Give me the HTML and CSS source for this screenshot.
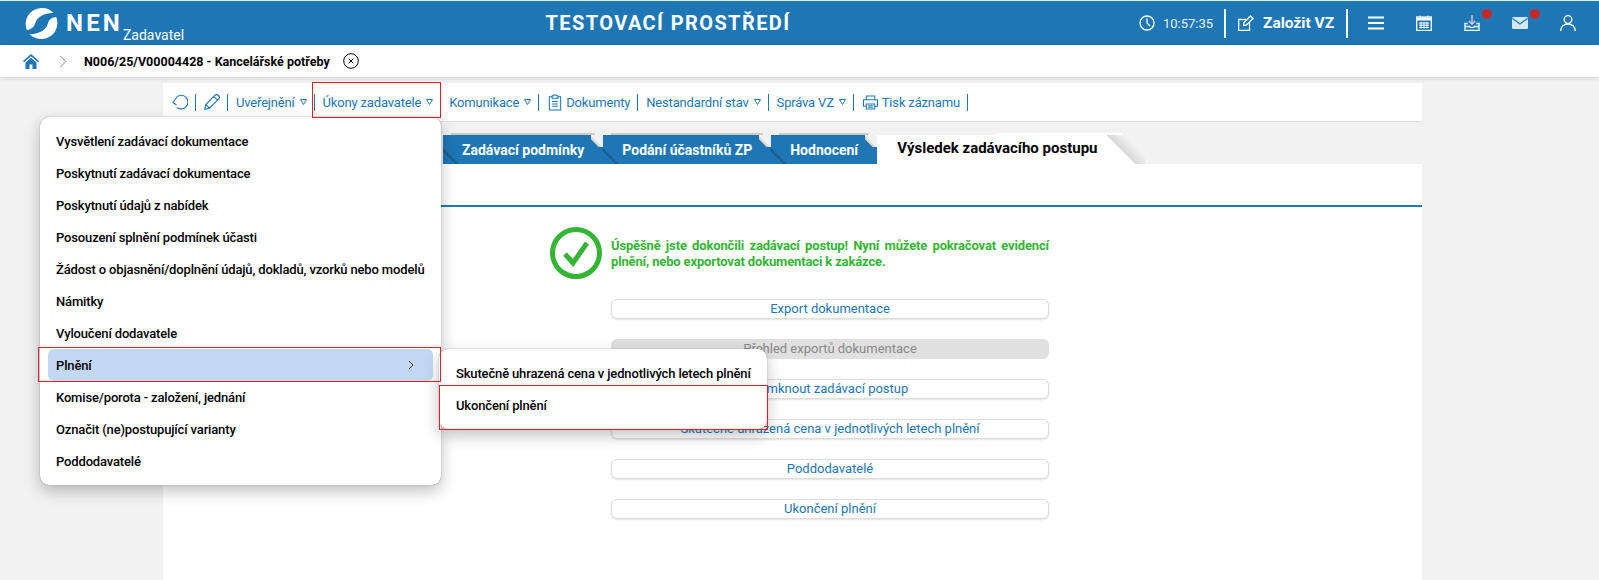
FILE: index.html
```html
<!DOCTYPE html>
<html lang="cs">
<head>
    <meta charset="UTF-8">
    <title>NEN Zadavatel</title>
    <link rel="stylesheet" href="styles.css">
</head>
<body>
    <header class="top-bar">
        <div class="brand">
            <svg class="brand-logo" viewBox="0 0 36 36">
                <path d="M2 25A17.500 17.500 0 0 1 31 6.500C23 6 13 10 11 18C10 22 6 25 2 25Z" fill="#fff"/>
                <path d="M2 25A17.500 17.500 0 0 1 31 6.500C23 6 13 10 11 18C10 22 6 25 2 25Z" fill="#fff" transform="rotate(180 18 18)"/>
            </svg>
            <span class="brand-name">NEN</span>
            <span class="brand-role">Zadavatel</span>
        </div>
        <div class="env-title">TESTOVACÍ PROSTŘEDÍ</div>
        <div class="top-tools">
            <svg class="tool-clock" viewBox="0 0 16 16"><circle cx="8" cy="8" r="7"/><path d="M8 3.500V8L11 11"/></svg>
            <span class="clock-time">10:57:35</span>
            <span class="top-sep"></span>
            <svg class="tool-edit" viewBox="0 0 16 16"><path d="M11.500 7.500V15.500H.7V4.500H8.500"/><path d="M5.500 10.500L6 7.500L12.500 1L15 3.500L8.500 10Z"/></svg>
            <span class="new-order">Založit VZ</span>
            <span class="top-sep"></span>
            <svg class="tool-icon tool-menu" viewBox="0 0 16 16"><path d="M0 2.500H16M0 8H16M0 13.500H16"/></svg>
            <svg class="tool-icon tool-cal" viewBox="0 0 16 16"><rect x=".7" y="2" width="14.600" height="13.500"/><path d="M.7 4H15.300" stroke-width="3"/><path d="M4 .5V3M12 .5V3M3 8H13M3 10.200H13M3 12.500H13M5 7V13.500M8 7V13.500M11 7V13.500" stroke-width="1"/></svg>
            <span class="tool-badged tool-down">
                <svg class="tool-icon" viewBox="0 0 16 16"><path d="M8 0V9M4.800 6L8 9.200L11.200 6" stroke="#f3c9dd"/><path d="M3.500 8.500H1V15.500H15V8.500H12.500M1 11.500H5.500C6 13 10 13 10.500 11.500H15"/></svg>
                <span class="badge"></span>
            </span>
            <span class="tool-badged tool-mail">
                <svg class="tool-icon" viewBox="0 0 16 16"><rect x="0" y="2" width="16" height="12" rx="1.500" fill="#d5e8f5" stroke="none"/><path d="M.5 3.500L8 9L15.500 3.500" stroke="#1e76b5" stroke-width="1.200"/></svg>
                <span class="badge"></span>
            </span>
            <svg class="tool-icon tool-user" viewBox="0 0 16 16"><circle cx="8" cy="4.500" r="3.800"/><path d="M.8 16C.8 11.500 4 9 8 9S15.200 11.500 15.200 16"/></svg>
        </div>
    </header>

    <nav class="crumb-bar">
        <svg class="crumb-home" viewBox="0 0 16 15">
            <path d="M8 0L0 7L1 8.300L8 2.300L15 8.300L16 7Z" fill="#1e76b5"/>
            <path d="M8 3.800L2.500 8.500V15H6.500V10.500H9.500V15H13.500V8.500Z" fill="#1e76b5"/>
        </svg>
        <svg class="crumb-next" viewBox="0 0 8 14"><path d="M1 1L7 7L1 13"/></svg>
        <span class="crumb-title">N006/25/V00004428 - Kancelářské potřeby</span>
        <svg class="crumb-close" viewBox="0 0 16 16"><circle cx="8" cy="8" r="7.300"/><path d="M5.700 5.700L10.300 10.300M10.300 5.700L5.700 10.300"/></svg>
    </nav>

    <main class="panel">
        <div class="toolbar">
            <svg class="tb-icon tb-back" viewBox="0 0 16 16"><path d="M5 2.700A6.800 6.800 0 1 1 5 13.500"/><path d="M5 2.700L1 8.500L4.500 11"/></svg>
            <span class="tb-sep"></span>
            <svg class="tb-icon tb-pencil" viewBox="0 0 16 16"><path d="M.7 15.300L1.800 10.500L11 1.200C12 .4 13.500 .5 14.500 1.500S15.600 4 14.800 5L5.500 14.200ZM1.800 10.500L5.500 14.200M9.800 2.500L13.500 6.200"/></svg>
            <span class="tb-sep"></span>
            <a class="tb-link">Uveřejnění</a>
            <svg class="caret" viewBox="0 0 7 6"><path d="M.5 .5H6.500L3.500 5.500Z"/></svg>
            <span class="tb-sep"></span>
            <a class="tb-link">Úkony zadavatele</a>
            <svg class="caret" viewBox="0 0 7 6"><path d="M.5 .5H6.500L3.500 5.500Z"/></svg>
            <span class="tb-sep"></span>
            <a class="tb-link">Komunikace</a>
            <svg class="caret" viewBox="0 0 7 6"><path d="M.5 .5H6.500L3.500 5.500Z"/></svg>
            <span class="tb-sep"></span>
            <svg class="tb-icon tb-doc" viewBox="0 0 16 18"><path d="M5 3H2V17H14V3H11M5 1.800H6.500C6.800 .5 9.200 .5 9.500 1.800H11V4.500H5ZM5 8H11M5 10.500H11M5 13H11"/></svg>
            <a class="tb-link">Dokumenty</a>
            <span class="tb-sep"></span>
            <a class="tb-link">Nestandardní stav</a>
            <svg class="caret" viewBox="0 0 7 6"><path d="M.5 .5H6.500L3.500 5.500Z"/></svg>
            <span class="tb-sep"></span>
            <a class="tb-link">Správa VZ</a>
            <svg class="caret" viewBox="0 0 7 6"><path d="M.5 .5H6.500L3.500 5.500Z"/></svg>
            <span class="tb-sep"></span>
            <svg class="tb-icon tb-print" viewBox="0 0 18 16"><path d="M4.500 5V1H13.500V5M4.500 12H1.500V5H16.500V12H13.500M4.500 9.500H13.500V15H4.500ZM6.500 11.500H11.500M6.500 13H11.500"/></svg>
            <a class="tb-link">Tisk záznamu</a>
            <span class="tb-sep"></span>
        </div>

        <div class="tabs">
            <div class="tab">Zadávací podmínky</div>
            <div class="tab">Podání účastníků ZP</div>
            <div class="tab">Hodnocení</div>
            <div class="tab tab-active">Výsledek zadávacího postupu</div>
        </div>

        <div class="tab-body">
            <div class="result-box">
                <svg class="ok-icon" viewBox="0 0 52 52"><circle cx="26" cy="26" r="23.500"/><path d="M15 27L23 36L37 16"/></svg>
                <div class="result-side">
                    <p class="ok-text">Úspěšně jste dokončili zadávací postup! Nyní můžete pokračovat evidencí plnění, nebo exportovat dokumentaci k zakázce.</p>
                    <a class="btn">Export dokumentace</a>
                    <a class="btn btn-off">Přehled exportů dokumentace</a>
                    <a class="btn">Zamknout zadávací postup</a>
                    <a class="btn">Skutečně uhrazená cena v jednotlivých letech plnění</a>
                    <a class="btn">Poddodavatelé</a>
                    <a class="btn">Ukončení plnění</a>
                </div>
            </div>
        </div>
    </main>

    <ul class="menu menu-main">
        <li>Vysvětlení zadávací dokumentace</li>
        <li>Poskytnutí zadávací dokumentace</li>
        <li>Poskytnutí údajů z nabídek</li>
        <li>Posouzení splnění podmínek účasti</li>
        <li>Žádost o objasnění/doplnění údajů, dokladů, vzorků nebo modelů</li>
        <li>Námitky</li>
        <li>Vyloučení dodavatele</li>
        <li class="menu-open">Plnění
            <svg class="menu-arrow" viewBox="0 0 6 10"><path d="M1 1L5 5L1 9"/></svg>
        </li>
        <li>Komise/porota - založení, jednání</li>
        <li>Označit (ne)postupující varianty</li>
        <li>Poddodavatelé</li>
    </ul>
    <ul class="menu menu-sub">
        <li>Skutečně uhrazená cena v jednotlivých letech plnění</li>
        <li>Ukončení plnění</li>
    </ul>

    <!-- red marks from the screenshot author -->
    <div class="mark mark-tool"></div>
    <div class="mark mark-item"></div>
    <div class="mark mark-sub"></div>
</body>
</html>
```

FILE: styles.css
```css
* {
    box-sizing: border-box;
}
html, body {
    height: 580px;
    overflow: hidden;
}
body {
    margin: 0;
    background-color: #f2f2f2;
    font-family: Roboto, Arial, sans-serif;
    font-size: 13px;
    color: #000;
}

/* top bar */
.top-bar {
    display: flex;
    align-items: center;
    height: 45px;
    border-top: 1px solid #dfeaf3;
    background-color: #1e76b5;
    color: #fff;
}
.brand {
    display: flex;
    width: 198px;
    height: 44px;
    padding-left: 25px;
}
.brand-logo {
    width: 33px;
    height: 33px;
    margin-top: 6px;
}
.brand-name {
    margin: 8px 0 0 8px;
    font-size: 24px;
    line-height: 28px;
    font-weight: 700;
    letter-spacing: 3.2px;
}
.brand-role {
    margin: 26px 0 0 0;
    font-size: 14px;
    line-height: 16px;
}
.env-title {
    flex: 1;
    text-align: center;
    font-size: 20px;
    font-weight: 700;
    letter-spacing: 1.4px;
}
.top-tools {
    display: flex;
    align-items: center;
    width: 461px;
    height: 44px;
}
.top-tools svg {
    fill: none;
    stroke: #fff;
    stroke-width: 1.3;
}
.tool-clock {
    width: 16px;
    height: 16px;
    margin-left: 1px;
}
.clock-time {
    width: 49px;
    margin-left: 8px;
    font-size: 13px;
    color: #e8f1f8;
}
.top-sep {
    width: 2px;
    height: 29px;
    margin-left: 12px;
    background-color: #fff;
}
.tool-edit {
    width: 16px;
    height: 16px;
    margin-left: 12px;
}
.new-order {
    width: 71px;
    margin-left: 9px;
    font-size: 15.5px;
    font-weight: 700;
    white-space: nowrap;
}
.tool-icon {
    width: 16px;
    height: 16px;
}
.top-tools .tool-menu {
    margin-left: 20px;
    stroke-width: 1.8;
}
.tool-cal,
.tool-down,
.tool-mail,
.tool-user {
    margin-left: 32px;
}
.tool-badged {
    position: relative;
    display: flex;
}
.badge {
    position: absolute;
    top: -6px;
    left: 18px;
    width: 10px;
    height: 10px;
    border-radius: 50%;
    background-color: #c62828;
}

/* breadcrumb */
.crumb-bar {
    position: relative;
    display: flex;
    align-items: center;
    height: 32px;
    padding-left: 23px;
    background-color: #fff;
    box-shadow: 0 1px 5px rgba(0, 0, 0, .15);
}
.crumb-home {
    width: 16px;
    height: 15px;
}
.crumb-next {
    width: 8px;
    height: 13px;
    margin-left: 20px;
    fill: none;
    stroke: #777;
}
.crumb-title {
    margin-left: 17px;
    font-size: 12.5px;
    font-weight: 700;
}
.crumb-close {
    width: 16px;
    height: 16px;
    margin-left: 13px;
    fill: none;
    stroke: #000;
}

/* content panel */
.panel {
    width: 1259px;
    height: 503px;
    margin-left: 163px;
    padding-top: 6px;
}
.toolbar {
    display: flex;
    align-items: center;
    height: 39px;
    padding-left: 9px;
    border-bottom: 1px solid #ddd;
    background-color: #fff;
}
.tb-icon {
    fill: none;
    stroke: #1e76b5;
    stroke-width: 1.1;
}
.tb-back {
    width: 16px;
    height: 16px;
}
.tb-pencil {
    width: 16px;
    height: 16px;
}
.tb-doc {
    width: 16px;
    height: 17px;
    margin-right: 3px;
}
.tb-print {
    width: 17px;
    height: 15px;
    margin-right: 3px;
}
.tb-sep {
    width: 1px;
    height: 17px;
    margin: 0 8px 0 7px;
    background-color: #1e76b5;
}
.tb-link {
    color: #1e76b5;
    letter-spacing: -.17px;
    white-space: nowrap;
}
.caret {
    width: 7px;
    height: 6px;
    margin-left: 5px;
    fill: none;
    stroke: #1e76b5;
    stroke-width: 1;
}

/* tabs */
.tabs {
    display: flex;
    height: 31px;
    margin-top: 11px;
    padding: 2px 0 0 280px;
}
.tab {
    position: relative;
    height: 29px;
    padding: 0 19px;
    background: linear-gradient(45deg, #1e76b5 8px, #175a8c 10px, #1e76b5 12px);
    color: #fff;
    font-size: 14px;
    line-height: 30px;
    font-weight: 700;
    white-space: nowrap;
}
.tab::before {
    content: "";
    position: absolute;
    top: -2px;
    left: 8px;
    right: 8px;
    height: 2px;
    background-color: #ccc;
}
.tab::after {
    content: "";
    position: absolute;
    top: 0;
    right: 0;
    width: 12px;
    height: 12px;
    background: linear-gradient(225deg, #f2f2f2 50%, #c4c4c4 68%, #1e76b5 71%);
}
.tab-active {
    width: 268px;
    padding: 0 0 0 20px;
    background: #fff;
    color: #000;
    font-size: 15px;
    line-height: 27px;
}
.tab-active::before {
    background-color: #fff;
    left: 120px;
    right: 23px;
}
.tab-active::after {
    width: 39px;
    height: 29px;
    background: linear-gradient(225deg, #f2f2f2 15px, #d6d6d6 27px, #fff 27.6px);
}
.tab-body {
    height: 416px;
    padding-top: 41px;
    background-color: #fff;
}
.result-box {
    display: flex;
    padding: 20px 0 0 387px;
    border-top: 2px solid #1e76b5;
}
.ok-icon {
    width: 52px;
    height: 52px;
    margin-right: 9px;
    fill: none;
    stroke: #35b435;
    stroke-width: 5;
}
.result-side {
    display: flex;
    flex-direction: column;
    gap: 20px;
    width: 438px;
}
.ok-text {
    margin: 11px 0 9px;
    color: #35b435;
    font-size: 13px;
    line-height: 16px;
    font-weight: 700;
    letter-spacing: -.15px;
    text-align: justify;
}
.btn {
    height: 20px;
    border: 1px solid #ddd;
    border-radius: 6px;
    background-color: #fff;
    box-shadow: 0 1px 2px rgba(0, 0, 0, .12);
    color: #1e76b5;
    text-align: center;
    line-height: 18px;
}
.btn-off {
    border-color: #e0e0e0;
    background-color: #e0e0e0;
    box-shadow: none;
    color: #888;
}

/* dropdown menus */
.menu {
    position: absolute;
    margin: 0;
    list-style: none;
    background-color: #fff;
    border-radius: 9px;
    box-shadow: 0 0 1px rgba(0, 0, 0, .6), 0 6px 16px rgba(0, 0, 0, .25);
    font-weight: 500;
    letter-spacing: -.15px;
}
.menu li {
    display: flex;
    align-items: center;
    height: 32px;
    padding-left: 8px;
    white-space: nowrap;
}
.menu-main {
    top: 117px;
    left: 40px;
    width: 401px;
    height: 368px;
    padding: 8px;
}
.menu-sub {
    top: 349px;
    left: 439px;
    width: 328px;
    height: 80px;
    padding: 8px;
}
.menu-sub li {
    padding-left: 9px;
}
.menu-open {
    position: relative;
    border-radius: 6px;
    background-color: #c3d9f3;
}
.menu-arrow {
    position: absolute;
    top: 11px;
    right: 19px;
    width: 6px;
    height: 10px;
    fill: none;
    stroke: #333;
}

/* red marks */
.mark {
    position: absolute;
    border: 1px solid #e3202a;
}
.mark-tool {
    top: 82px;
    left: 312px;
    width: 129px;
    height: 36px;
}
.mark-item {
    top: 347px;
    left: 38px;
    width: 403px;
    height: 35px;
}
.mark-sub {
    top: 385px;
    left: 439px;
    width: 329px;
    height: 45px;
}
```
